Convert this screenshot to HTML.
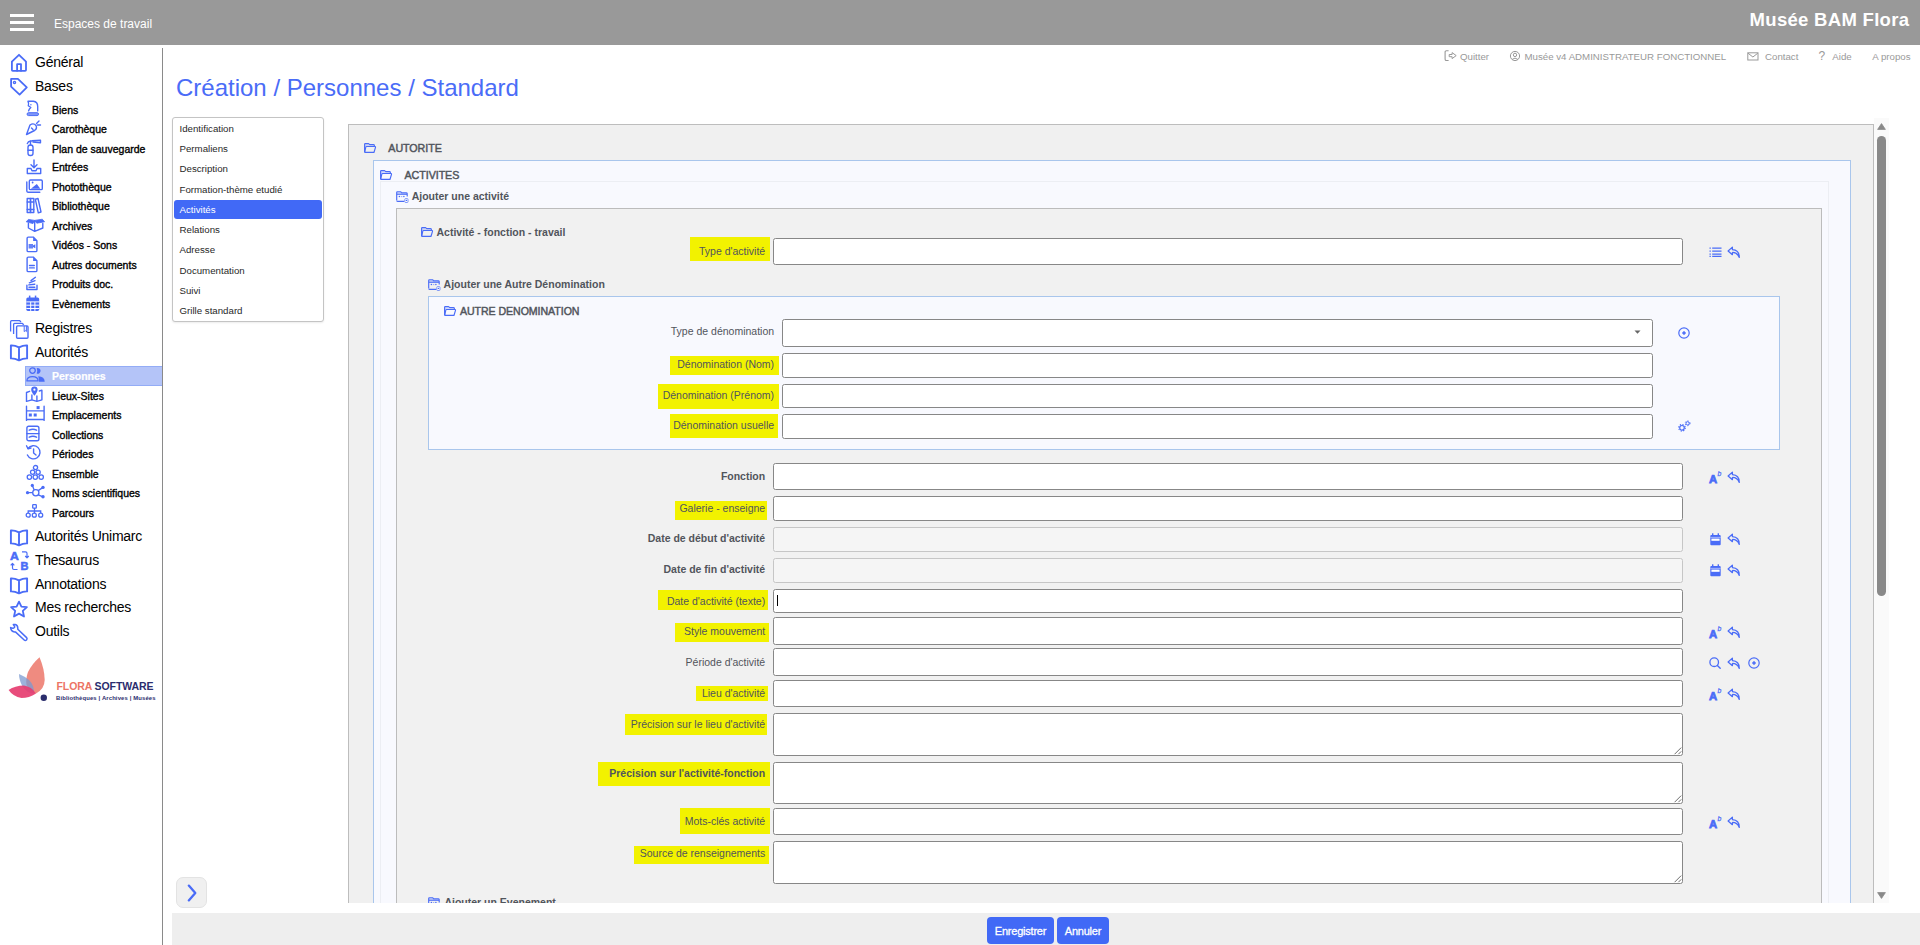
<!DOCTYPE html>
<html><head><meta charset="utf-8"><title>Création / Personnes / Standard</title>
<style>
html,body{margin:0;padding:0;overflow:hidden;}
body{width:1920px;height:945px;overflow:hidden;position:relative;background:#fff;font-family:"Liberation Sans",sans-serif;}
.t{position:absolute;white-space:pre;}
.b{position:absolute;box-sizing:border-box;}
.i{position:absolute;overflow:visible;}
</style></head><body>

<div class="b" style="left:0px;top:0px;width:1920px;height:45px;background:#999;"></div>
<div class="b" style="left:10px;top:14px;width:24px;height:3px;background:#fff;"></div>
<div class="b" style="left:10px;top:21px;width:24px;height:3px;background:#fff;"></div>
<div class="b" style="left:10px;top:28px;width:24px;height:3px;background:#fff;"></div>
<div class="t" style="left:54px;top:16.34px;font-size:12px;line-height:17px;color:#fff;font-weight:normal;">Espaces de travail</div>
<div class="t" style="right:10.700000000000045px;text-align:right;top:6.89px;font-size:18.5px;line-height:26px;color:#fff;font-weight:bold;letter-spacing:0.3px;">Musée BAM Flora</div>
<div class="t" style="left:1460px;top:49.64px;font-size:9.7px;line-height:14px;color:#999;font-weight:normal;">Quitter</div>
<div class="t" style="left:1524.5px;top:49.64px;font-size:9.7px;line-height:14px;color:#999;font-weight:normal;">Musée v4 ADMINISTRATEUR FONCTIONNEL</div>
<div class="t" style="left:1765px;top:49.64px;font-size:9.7px;line-height:14px;color:#999;font-weight:normal;">Contact</div>
<div class="t" style="left:1832.3px;top:49.64px;font-size:9.7px;line-height:14px;color:#999;font-weight:normal;">Aide</div>
<div class="t" style="left:1872.3px;top:49.64px;font-size:9.7px;line-height:14px;color:#999;font-weight:normal;">A propos</div>
<svg class="i" style="left:1444px;top:50px;" width="14" height="12" viewBox="0 0 14 12"><path d="M4.6 0.7 H2.4 Q1.1 0.7 1.1 2 V9.2 Q1.1 10.5 2.4 10.5 H4.6" fill="none" stroke="#999" stroke-width="1.1"/><path d="M5.2 4.5 H8.1 V2.6 L12.2 5.6 L8.1 8.6 V6.7 H5.2 Z" fill="none" stroke="#999" stroke-width="1" stroke-linejoin="round"/></svg>
<svg class="i" style="left:1509px;top:50px;" width="12" height="12" viewBox="0 0 12 12"><circle cx="6" cy="6" r="4.6" fill="none" stroke="#999" stroke-width="1"/><circle cx="6" cy="4.9" r="1.7" fill="none" stroke="#999" stroke-width="1"/><path d="M3.2 9.4 Q6 6.8 8.8 9.4" fill="none" stroke="#999" stroke-width="1"/></svg>
<svg class="i" style="left:1747px;top:52px;" width="12" height="9" viewBox="0 0 12 9"><rect x="0.8" y="0.8" width="10.2" height="7.2" fill="none" stroke="#999" stroke-width="1"/><path d="M1 1.2 L5.9 5 L10.8 1.2" fill="none" stroke="#999" stroke-width="1"/></svg>
<div class="t" style="left:1818.5px;top:47.84px;font-size:12px;line-height:17px;color:#999;font-weight:normal;">?</div>
<div class="b" style="left:162px;top:48px;width:1px;height:897px;background:#8a8a8a;"></div>
<div class="t" style="left:35px;top:52.15px;font-size:14px;line-height:20px;color:#000;font-weight:normal;letter-spacing:-0.25px;">Général</div>
<div class="t" style="left:35px;top:76.15px;font-size:14px;line-height:20px;color:#000;font-weight:normal;letter-spacing:-0.25px;">Bases</div>
<div class="t" style="left:35px;top:317.75px;font-size:14px;line-height:20px;color:#000;font-weight:normal;letter-spacing:-0.25px;">Registres</div>
<div class="t" style="left:35px;top:341.95px;font-size:14px;line-height:20px;color:#000;font-weight:normal;letter-spacing:-0.25px;">Autorités</div>
<div class="t" style="left:35px;top:525.95px;font-size:14px;line-height:20px;color:#000;font-weight:normal;letter-spacing:-0.25px;">Autorités Unimarc</div>
<div class="t" style="left:35px;top:549.65px;font-size:14px;line-height:20px;color:#000;font-weight:normal;letter-spacing:-0.25px;">Thesaurus</div>
<div class="t" style="left:35px;top:573.75px;font-size:14px;line-height:20px;color:#000;font-weight:normal;letter-spacing:-0.25px;">Annotations</div>
<div class="t" style="left:35px;top:597.45px;font-size:14px;line-height:20px;color:#000;font-weight:normal;letter-spacing:-0.25px;">Mes recherches</div>
<div class="t" style="left:35px;top:621.35px;font-size:14px;line-height:20px;color:#000;font-weight:normal;letter-spacing:-0.25px;">Outils</div>
<div class="b" style="left:25px;top:366px;width:137px;height:20px;background:#b4c4f8;border:1px solid #93acf6;border-right:none;"></div>
<div class="t" style="left:52px;top:368.76px;font-size:10.5px;line-height:15px;color:#fff;font-weight:bold;-webkit-text-stroke:0.2px #fff;">Personnes</div>
<div class="t" style="left:52px;top:102.86px;font-size:10.5px;line-height:15px;color:#000;font-weight:normal;-webkit-text-stroke:0.35px #000;">Biens</div>
<div class="t" style="left:52px;top:121.66px;font-size:10.5px;line-height:15px;color:#000;font-weight:normal;-webkit-text-stroke:0.35px #000;">Carothèque</div>
<div class="t" style="left:52px;top:141.66px;font-size:10.5px;line-height:15px;color:#000;font-weight:normal;-webkit-text-stroke:0.35px #000;">Plan de sauvegarde</div>
<div class="t" style="left:52px;top:160.46px;font-size:10.5px;line-height:15px;color:#000;font-weight:normal;-webkit-text-stroke:0.35px #000;">Entrées</div>
<div class="t" style="left:52px;top:180.36px;font-size:10.5px;line-height:15px;color:#000;font-weight:normal;-webkit-text-stroke:0.35px #000;">Photothèque</div>
<div class="t" style="left:52px;top:199.46px;font-size:10.5px;line-height:15px;color:#000;font-weight:normal;-webkit-text-stroke:0.35px #000;">Bibliothèque</div>
<div class="t" style="left:52px;top:219.26px;font-size:10.5px;line-height:15px;color:#000;font-weight:normal;-webkit-text-stroke:0.35px #000;">Archives</div>
<div class="t" style="left:52px;top:238.26px;font-size:10.5px;line-height:15px;color:#000;font-weight:normal;-webkit-text-stroke:0.35px #000;">Vidéos - Sons</div>
<div class="t" style="left:52px;top:258.16px;font-size:10.5px;line-height:15px;color:#000;font-weight:normal;-webkit-text-stroke:0.35px #000;">Autres documents</div>
<div class="t" style="left:52px;top:277.46px;font-size:10.5px;line-height:15px;color:#000;font-weight:normal;-webkit-text-stroke:0.35px #000;">Produits doc.</div>
<div class="t" style="left:52px;top:297.36px;font-size:10.5px;line-height:15px;color:#000;font-weight:normal;-webkit-text-stroke:0.35px #000;">Evènements</div>
<div class="t" style="left:52px;top:388.66px;font-size:10.5px;line-height:15px;color:#000;font-weight:normal;-webkit-text-stroke:0.35px #000;">Lieux-Sites</div>
<div class="t" style="left:52px;top:407.66px;font-size:10.5px;line-height:15px;color:#000;font-weight:normal;-webkit-text-stroke:0.35px #000;">Emplacements</div>
<div class="t" style="left:52px;top:427.66px;font-size:10.5px;line-height:15px;color:#000;font-weight:normal;-webkit-text-stroke:0.35px #000;">Collections</div>
<div class="t" style="left:52px;top:446.76px;font-size:10.5px;line-height:15px;color:#000;font-weight:normal;-webkit-text-stroke:0.35px #000;">Périodes</div>
<div class="t" style="left:52px;top:466.96px;font-size:10.5px;line-height:15px;color:#000;font-weight:normal;-webkit-text-stroke:0.35px #000;">Ensemble</div>
<div class="t" style="left:52px;top:486.06px;font-size:10.5px;line-height:15px;color:#000;font-weight:normal;-webkit-text-stroke:0.35px #000;">Noms scientifiques</div>
<div class="t" style="left:52px;top:505.76px;font-size:10.5px;line-height:15px;color:#000;font-weight:normal;-webkit-text-stroke:0.35px #000;">Parcours</div>
<div class="t" style="left:176px;top:71.28px;font-size:24px;line-height:34px;color:#4a6cf7;font-weight:normal;">Création / Personnes / Standard</div>
<div class="b" style="left:172px;top:117px;width:152px;height:205px;border:1px solid #c4c4c4;border-radius:3px;background:#fff;box-shadow:0 1px 2px rgba(0,0,0,0.08);"></div>
<div class="b" style="left:174px;top:200px;width:148px;height:19px;background:#4169f6;border-radius:3px;"></div>
<div class="t" style="left:179.5px;top:121.84px;font-size:9.7px;line-height:14px;color:#282828;font-weight:normal;">Identification</div>
<div class="t" style="left:179.5px;top:141.94px;font-size:9.7px;line-height:14px;color:#282828;font-weight:normal;">Permaliens</div>
<div class="t" style="left:179.5px;top:162.04px;font-size:9.7px;line-height:14px;color:#282828;font-weight:normal;">Description</div>
<div class="t" style="left:179.5px;top:182.64px;font-size:9.7px;line-height:14px;color:#282828;font-weight:normal;">Formation-thème etudié</div>
<div class="t" style="left:179.5px;top:202.84px;font-size:9.7px;line-height:14px;color:#fff;font-weight:normal;">Activités</div>
<div class="t" style="left:179.5px;top:222.94px;font-size:9.7px;line-height:14px;color:#282828;font-weight:normal;">Relations</div>
<div class="t" style="left:179.5px;top:243.04px;font-size:9.7px;line-height:14px;color:#282828;font-weight:normal;">Adresse</div>
<div class="t" style="left:179.5px;top:263.64px;font-size:9.7px;line-height:14px;color:#282828;font-weight:normal;">Documentation</div>
<div class="t" style="left:179.5px;top:283.74px;font-size:9.7px;line-height:14px;color:#282828;font-weight:normal;">Suivi</div>
<div class="t" style="left:179.5px;top:303.84px;font-size:9.7px;line-height:14px;color:#282828;font-weight:normal;">Grille standard</div>
<div class="b" style="left:348px;top:124px;width:1526px;height:821px;background:#f0f0f0;border:1px solid #bdbdbd;"></div>
<div class="b" style="left:373px;top:160px;width:1478px;height:785px;background:#f8f9fe;border:1px solid #a9c6ec;"></div>
<div class="b" style="left:380px;top:181px;width:1449px;height:764px;border:1px solid #eceef3;"></div>
<div class="b" style="left:396px;top:208px;width:1426px;height:737px;background:#f1f1f1;border:1px solid #bcbcbc;"></div>
<svg class="i" style="left:364px;top:143px;" width="12" height="10" viewBox="0 0 12 10"><path d="M0.6 9.4 V1.3 Q0.6 0.6 1.3 0.6 H4.6 L5.7 1.6 H9.4 Q10.3 1.6 10.4 2.5 V3.4" fill="none" stroke="#4a6cf7" stroke-width="1.15" stroke-linejoin="round"/><path d="M0.6 9.4 H9.6 Q10 9.4 10.1 9 L11.5 4.3 Q11.6 3.5 10.9 3.5 H2.6 Q2 3.5 1.8 4.1 L0.7 9" fill="none" stroke="#4a6cf7" stroke-width="1.15" stroke-linejoin="round"/><path d="M1 1.2 H4.4 L5.4 2.2 H10 V3.2 H2 L1 4.5 Z" fill="#4a6cf7" opacity="0.22"/></svg>
<div class="t" style="left:388.3px;top:140.79px;font-size:10.7px;line-height:15px;color:#51555c;font-weight:normal;letter-spacing:-0.05px;-webkit-text-stroke:0.45px #51555c;">AUTORITE</div>
<svg class="i" style="left:380px;top:170px;" width="12" height="10" viewBox="0 0 12 10"><path d="M0.6 9.4 V1.3 Q0.6 0.6 1.3 0.6 H4.6 L5.7 1.6 H9.4 Q10.3 1.6 10.4 2.5 V3.4" fill="none" stroke="#4a6cf7" stroke-width="1.15" stroke-linejoin="round"/><path d="M0.6 9.4 H9.6 Q10 9.4 10.1 9 L11.5 4.3 Q11.6 3.5 10.9 3.5 H2.6 Q2 3.5 1.8 4.1 L0.7 9" fill="none" stroke="#4a6cf7" stroke-width="1.15" stroke-linejoin="round"/><path d="M1 1.2 H4.4 L5.4 2.2 H10 V3.2 H2 L1 4.5 Z" fill="#4a6cf7" opacity="0.22"/></svg>
<div class="t" style="left:404.5px;top:167.99px;font-size:10.7px;line-height:15px;color:#51555c;font-weight:normal;letter-spacing:-0.05px;-webkit-text-stroke:0.45px #51555c;">ACTIVITES</div>
<svg class="i" style="left:396px;top:190.5px;" width="13" height="12" viewBox="0 0 13 12"><path d="M0.7 9.3 V1.4 Q0.7 0.7 1.4 0.7 H4.6 L5.6 1.8 H10.3 Q11.1 1.8 11.2 2.6 V5.5" fill="none" stroke="#4a6cf7" stroke-width="1.15" stroke-linejoin="round"/><path d="M0.7 3.3 H11" stroke="#4a6cf7" stroke-width="1"/><path d="M0.7 9.5 Q0.7 10.4 1.6 10.4 H8.3" fill="none" stroke="#4a6cf7" stroke-width="1.15"/><path d="M1 1.2 H4.4 L5.4 2.4 H10.8 V3 H1 Z" fill="#4a6cf7" opacity="0.3"/><circle cx="3.4" cy="5.6" r="0.75" fill="#4a6cf7"/><path d="M4.9 5.6 H6.3" stroke="#4a6cf7" stroke-width="0.9" opacity="0.6"/><circle cx="7.9" cy="5.6" r="0.75" fill="#4a6cf7"/><rect x="8.8" y="7.6" width="3.2" height="3.9" rx="0.8" fill="#fff" stroke="#4a6cf7" stroke-width="0.8" opacity="0.85"/><circle cx="10.4" cy="9.4" r="0.7" fill="#4a6cf7"/></svg>
<div class="t" style="left:411.7px;top:188.96px;font-size:10.5px;line-height:15px;color:#51555c;font-weight:bold;">Ajouter une activité</div>
<svg class="i" style="left:421px;top:227px;" width="12" height="10" viewBox="0 0 12 10"><path d="M0.6 9.4 V1.3 Q0.6 0.6 1.3 0.6 H4.6 L5.7 1.6 H9.4 Q10.3 1.6 10.4 2.5 V3.4" fill="none" stroke="#4a6cf7" stroke-width="1.15" stroke-linejoin="round"/><path d="M0.6 9.4 H9.6 Q10 9.4 10.1 9 L11.5 4.3 Q11.6 3.5 10.9 3.5 H2.6 Q2 3.5 1.8 4.1 L0.7 9" fill="none" stroke="#4a6cf7" stroke-width="1.15" stroke-linejoin="round"/><path d="M1 1.2 H4.4 L5.4 2.2 H10 V3.2 H2 L1 4.5 Z" fill="#4a6cf7" opacity="0.22"/></svg>
<div class="t" style="left:436.5px;top:224.86px;font-size:10.5px;line-height:15px;color:#51555c;font-weight:bold;">Activité - fonction - travail</div>
<div class="b" style="left:690px;top:237px;width:80px;height:24px;background:#f2f200;"></div>
<div class="t" style="right:1154.8px;text-align:right;top:243.61px;font-size:10.5px;line-height:15px;color:#51555c;font-weight:normal;">Type d'activité</div>
<div class="b" style="left:773px;top:238px;width:910px;height:27px;background:#fff;border:1px solid #878787;border-radius:2.5px;"></div>
<svg class="i" style="left:428px;top:279px;" width="13" height="12" viewBox="0 0 13 12"><path d="M0.7 9.3 V1.4 Q0.7 0.7 1.4 0.7 H4.6 L5.6 1.8 H10.3 Q11.1 1.8 11.2 2.6 V5.5" fill="none" stroke="#4a6cf7" stroke-width="1.15" stroke-linejoin="round"/><path d="M0.7 3.3 H11" stroke="#4a6cf7" stroke-width="1"/><path d="M0.7 9.5 Q0.7 10.4 1.6 10.4 H8.3" fill="none" stroke="#4a6cf7" stroke-width="1.15"/><path d="M1 1.2 H4.4 L5.4 2.4 H10.8 V3 H1 Z" fill="#4a6cf7" opacity="0.3"/><circle cx="3.4" cy="5.6" r="0.75" fill="#4a6cf7"/><path d="M4.9 5.6 H6.3" stroke="#4a6cf7" stroke-width="0.9" opacity="0.6"/><circle cx="7.9" cy="5.6" r="0.75" fill="#4a6cf7"/><rect x="8.8" y="7.6" width="3.2" height="3.9" rx="0.8" fill="#fff" stroke="#4a6cf7" stroke-width="0.8" opacity="0.85"/><circle cx="10.4" cy="9.4" r="0.7" fill="#4a6cf7"/></svg>
<div class="t" style="left:443.6px;top:276.86px;font-size:10.5px;line-height:15px;color:#51555c;font-weight:bold;">Ajouter une Autre Dénomination</div>
<div class="b" style="left:428px;top:296px;width:1352px;height:154px;background:#f8f9fe;border:1px solid #a9c6ec;"></div>
<svg class="i" style="left:444px;top:306px;" width="12" height="10" viewBox="0 0 12 10"><path d="M0.6 9.4 V1.3 Q0.6 0.6 1.3 0.6 H4.6 L5.7 1.6 H9.4 Q10.3 1.6 10.4 2.5 V3.4" fill="none" stroke="#4a6cf7" stroke-width="1.15" stroke-linejoin="round"/><path d="M0.6 9.4 H9.6 Q10 9.4 10.1 9 L11.5 4.3 Q11.6 3.5 10.9 3.5 H2.6 Q2 3.5 1.8 4.1 L0.7 9" fill="none" stroke="#4a6cf7" stroke-width="1.15" stroke-linejoin="round"/><path d="M1 1.2 H4.4 L5.4 2.2 H10 V3.2 H2 L1 4.5 Z" fill="#4a6cf7" opacity="0.22"/></svg>
<div class="t" style="left:459.9px;top:304.23px;font-size:10.6px;line-height:15px;color:#51555c;font-weight:normal;letter-spacing:-0.05px;-webkit-text-stroke:0.45px #51555c;">AUTRE DENOMINATION</div>
<div class="t" style="right:1145.9px;text-align:right;top:323.86px;font-size:10.5px;line-height:15px;color:#51555c;font-weight:normal;">Type de dénomination</div>
<div class="b" style="left:782px;top:319px;width:871px;height:28px;background:#fff;border:1px solid #878787;border-radius:2.5px;"></div>
<svg class="i" style="left:1634px;top:330px;" width="8" height="5" viewBox="0 0 8 5"><path d="M0.5 0.5 H6.5 L3.5 3.8 Z" fill="#666"/></svg>
<div class="b" style="left:670px;top:356px;width:109px;height:19px;background:#f2f200;"></div>
<div class="t" style="right:1145.9px;text-align:right;top:356.56px;font-size:10.5px;line-height:15px;color:#51555c;font-weight:normal;">Dénomination (Nom)</div>
<div class="b" style="left:782px;top:353px;width:871px;height:25px;background:#fff;border:1px solid #878787;border-radius:2.5px;"></div>
<div class="b" style="left:658px;top:384px;width:121px;height:25px;background:#f2f200;"></div>
<div class="t" style="right:1145.9px;text-align:right;top:387.56px;font-size:10.5px;line-height:15px;color:#51555c;font-weight:normal;">Dénomination (Prénom)</div>
<div class="b" style="left:782px;top:384px;width:871px;height:24px;background:#fff;border:1px solid #878787;border-radius:2.5px;"></div>
<div class="b" style="left:670px;top:414px;width:108px;height:24px;background:#f2f200;"></div>
<div class="t" style="right:1145.9px;text-align:right;top:418.46px;font-size:10.5px;line-height:15px;color:#51555c;font-weight:normal;">Dénomination usuelle</div>
<div class="b" style="left:782px;top:414px;width:871px;height:25px;background:#fff;border:1px solid #878787;border-radius:2.5px;"></div>
<div class="t" style="right:1154.8px;text-align:right;top:468.86px;font-size:10.5px;line-height:15px;color:#51555c;font-weight:bold;">Fonction</div>
<div class="b" style="left:773px;top:463px;width:910px;height:27px;background:#fff;border:1px solid #878787;border-radius:2.5px;"></div>
<div class="b" style="left:675px;top:501px;width:92px;height:19px;background:#f2f200;"></div>
<div class="t" style="right:1154.8px;text-align:right;top:500.56px;font-size:10.5px;line-height:15px;color:#51555c;font-weight:normal;">Galerie - enseigne</div>
<div class="b" style="left:773px;top:496px;width:910px;height:25px;background:#fff;border:1px solid #878787;border-radius:2.5px;"></div>
<div class="t" style="right:1154.8px;text-align:right;top:531.06px;font-size:10.5px;line-height:15px;color:#51555c;font-weight:bold;">Date de début d'activité</div>
<div class="b" style="left:773px;top:527px;width:910px;height:25px;background:#f5f5f5;border:1px solid #c6c6c6;border-radius:2.5px;"></div>
<div class="t" style="right:1154.8px;text-align:right;top:562.16px;font-size:10.5px;line-height:15px;color:#51555c;font-weight:bold;">Date de fin d'activité</div>
<div class="b" style="left:773px;top:558px;width:910px;height:25px;background:#f5f5f5;border:1px solid #c6c6c6;border-radius:2.5px;"></div>
<div class="b" style="left:658px;top:590px;width:110px;height:20px;background:#f2f200;"></div>
<div class="t" style="right:1154.8px;text-align:right;top:593.56px;font-size:10.5px;line-height:15px;color:#51555c;font-weight:normal;">Date d'activité (texte)</div>
<div class="b" style="left:773px;top:589px;width:910px;height:24px;background:#fff;border:1px solid #878787;border-radius:2.5px;"></div>
<div class="b" style="left:777px;top:595px;width:1px;height:11px;background:#000;"></div>
<div class="b" style="left:675px;top:623px;width:94px;height:19px;background:#f2f200;"></div>
<div class="t" style="right:1154.8px;text-align:right;top:624.16px;font-size:10.5px;line-height:15px;color:#51555c;font-weight:normal;">Style mouvement</div>
<div class="b" style="left:773px;top:617px;width:910px;height:28px;background:#fff;border:1px solid #878787;border-radius:2.5px;"></div>
<div class="t" style="right:1154.8px;text-align:right;top:654.86px;font-size:10.5px;line-height:15px;color:#51555c;font-weight:normal;">Période d'activité</div>
<div class="b" style="left:773px;top:648px;width:910px;height:28px;background:#fff;border:1px solid #878787;border-radius:2.5px;"></div>
<div class="b" style="left:696px;top:686px;width:72px;height:15px;background:#f2f200;"></div>
<div class="t" style="right:1154.8px;text-align:right;top:686.26px;font-size:10.5px;line-height:15px;color:#51555c;font-weight:normal;">Lieu d'activité</div>
<div class="b" style="left:773px;top:680px;width:910px;height:27px;background:#fff;border:1px solid #878787;border-radius:2.5px;"></div>
<div class="b" style="left:625px;top:714px;width:142px;height:21px;background:#f2f200;"></div>
<div class="t" style="right:1154.8px;text-align:right;top:717.26px;font-size:10.5px;line-height:15px;color:#51555c;font-weight:normal;">Précision sur le lieu d'activité</div>
<div class="b" style="left:773px;top:713px;width:910px;height:43px;background:#fff;border:1px solid #878787;border-radius:2.5px;"></div>
<svg class="i" style="left:1673.5px;top:746.5px;" width="8" height="8" viewBox="0 0 8 8"><path d="M7.2 0.6 L0.6 7.2 M7.2 4.4 L4.4 7.2" stroke="#666" stroke-width="0.95"/></svg>
<div class="b" style="left:598px;top:762px;width:172px;height:24px;background:#f2f200;"></div>
<div class="t" style="right:1154.8px;text-align:right;top:766.16px;font-size:10.5px;line-height:15px;color:#51555c;font-weight:bold;">Précision sur l'activité-fonction</div>
<div class="b" style="left:773px;top:762px;width:910px;height:42px;background:#fff;border:1px solid #878787;border-radius:2.5px;"></div>
<svg class="i" style="left:1673.5px;top:794.5px;" width="8" height="8" viewBox="0 0 8 8"><path d="M7.2 0.6 L0.6 7.2 M7.2 4.4 L4.4 7.2" stroke="#666" stroke-width="0.95"/></svg>
<div class="b" style="left:680px;top:808px;width:90px;height:26px;background:#f2f200;"></div>
<div class="t" style="right:1154.8px;text-align:right;top:814.46px;font-size:10.5px;line-height:15px;color:#51555c;font-weight:normal;">Mots-clés activité</div>
<div class="b" style="left:773px;top:808px;width:910px;height:27px;background:#fff;border:1px solid #878787;border-radius:2.5px;"></div>
<div class="b" style="left:634px;top:846px;width:135px;height:18px;background:#f2f200;"></div>
<div class="t" style="right:1154.8px;text-align:right;top:846.16px;font-size:10.5px;line-height:15px;color:#51555c;font-weight:normal;">Source de renseignements</div>
<div class="b" style="left:773px;top:841px;width:910px;height:43px;background:#fff;border:1px solid #878787;border-radius:2.5px;"></div>
<svg class="i" style="left:1673.5px;top:874.5px;" width="8" height="8" viewBox="0 0 8 8"><path d="M7.2 0.6 L0.6 7.2 M7.2 4.4 L4.4 7.2" stroke="#666" stroke-width="0.95"/></svg>
<svg class="i" style="left:428px;top:897px;" width="13" height="12" viewBox="0 0 13 12"><path d="M0.7 9.3 V1.4 Q0.7 0.7 1.4 0.7 H4.6 L5.6 1.8 H10.3 Q11.1 1.8 11.2 2.6 V5.5" fill="none" stroke="#4a6cf7" stroke-width="1.15" stroke-linejoin="round"/><path d="M0.7 3.3 H11" stroke="#4a6cf7" stroke-width="1"/><path d="M0.7 9.5 Q0.7 10.4 1.6 10.4 H8.3" fill="none" stroke="#4a6cf7" stroke-width="1.15"/><path d="M1 1.2 H4.4 L5.4 2.4 H10.8 V3 H1 Z" fill="#4a6cf7" opacity="0.3"/><circle cx="3.4" cy="5.6" r="0.75" fill="#4a6cf7"/><path d="M4.9 5.6 H6.3" stroke="#4a6cf7" stroke-width="0.9" opacity="0.6"/><circle cx="7.9" cy="5.6" r="0.75" fill="#4a6cf7"/><rect x="8.8" y="7.6" width="3.2" height="3.9" rx="0.8" fill="#fff" stroke="#4a6cf7" stroke-width="0.8" opacity="0.85"/><circle cx="10.4" cy="9.4" r="0.7" fill="#4a6cf7"/></svg>
<div class="t" style="left:444.4px;top:894.86px;font-size:10.5px;line-height:15px;color:#51555c;font-weight:bold;">Ajouter un Evenement</div>
<svg class="i" style="left:1708.7px;top:247px;" width="13" height="10" viewBox="0 0 13 10"><path d="M0.5 1.2 H1.8 M0.5 4.2 H1.8 M0.5 7.2 H1.8 M3.2 1.2 H12.5 M3.2 4.2 H12.5 M3.2 7.2 H12.5 M0.5 9.3 H1.8 M3.2 9.3 H12.5" stroke="#4a6cf7" stroke-width="1.3"/></svg>
<svg class="i" style="left:1727.4px;top:246px;" width="14" height="12.5" viewBox="0 0 14 12.5"><path d="M5.4 1.1 L1.1 5 L5.4 8.7 V6.5 Q10.1 6.4 12.3 11.4 Q12.3 4 5.4 3.7 Z" fill="none" stroke="#4a6cf7" stroke-width="1.25" stroke-linejoin="round"/></svg>
<svg class="i" style="left:1678px;top:327px;" width="12" height="12" viewBox="0 0 12 12"><circle cx="6" cy="6" r="5.2" fill="none" stroke="#4a6cf7" stroke-width="1.2"/><path d="M6 4.2 V7.8 M4.2 6 H7.8" stroke="#4a6cf7" stroke-width="1.6"/></svg>
<svg class="i" style="left:1678px;top:419.5px;" width="13" height="13" viewBox="0 0 13 13"><circle cx="4" cy="7.8" r="2.3" fill="none" stroke="#4a6cf7" stroke-width="1.2"/><circle cx="4" cy="7.8" r="3.3" fill="none" stroke="#4a6cf7" stroke-width="1.1" stroke-dasharray="1.3 1.29"/><circle cx="9.6" cy="3.3" r="1.6" fill="none" stroke="#4a6cf7" stroke-width="1"/><circle cx="9.6" cy="3.3" r="2.4" fill="none" stroke="#4a6cf7" stroke-width="1" stroke-dasharray="1.1 1.41"/></svg>
<svg class="i" style="left:1709px;top:471px;" width="13" height="12" viewBox="0 0 13 12"><text x="0" y="11.8" font-family="Liberation Sans" font-weight="bold" font-size="11.3" fill="#4a6cf7" stroke="#4a6cf7" stroke-width="0.75">A</text><text x="8.4" y="4.9" font-family="Liberation Sans" font-style="italic" font-size="6.8" fill="#4a6cf7" stroke="#4a6cf7" stroke-width="0.25">b</text></svg>
<svg class="i" style="left:1727.4px;top:471.2px;" width="14" height="12.5" viewBox="0 0 14 12.5"><path d="M5.4 1.1 L1.1 5 L5.4 8.7 V6.5 Q10.1 6.4 12.3 11.4 Q12.3 4 5.4 3.7 Z" fill="none" stroke="#4a6cf7" stroke-width="1.25" stroke-linejoin="round"/></svg>
<svg class="i" style="left:1709.5px;top:532.8px;" width="11" height="13" viewBox="0 0 11 13"><rect x="0.3" y="2" width="10.4" height="10.2" rx="1" fill="#4a6cf7"/><rect x="2" y="0.3" width="1.4" height="2.5" fill="#4a6cf7"/><rect x="7.6" y="0.3" width="1.4" height="2.5" fill="#4a6cf7"/><rect x="1.4" y="5.6" width="8.2" height="2.2" fill="#fff"/><rect x="0.3" y="3.9" width="10.4" height="0.8" fill="#b9c6fb"/></svg>
<svg class="i" style="left:1727.4px;top:533.2px;" width="14" height="12.5" viewBox="0 0 14 12.5"><path d="M5.4 1.1 L1.1 5 L5.4 8.7 V6.5 Q10.1 6.4 12.3 11.4 Q12.3 4 5.4 3.7 Z" fill="none" stroke="#4a6cf7" stroke-width="1.25" stroke-linejoin="round"/></svg>
<svg class="i" style="left:1709.5px;top:563.8px;" width="11" height="13" viewBox="0 0 11 13"><rect x="0.3" y="2" width="10.4" height="10.2" rx="1" fill="#4a6cf7"/><rect x="2" y="0.3" width="1.4" height="2.5" fill="#4a6cf7"/><rect x="7.6" y="0.3" width="1.4" height="2.5" fill="#4a6cf7"/><rect x="1.4" y="5.6" width="8.2" height="2.2" fill="#fff"/><rect x="0.3" y="3.9" width="10.4" height="0.8" fill="#b9c6fb"/></svg>
<svg class="i" style="left:1727.4px;top:564.2px;" width="14" height="12.5" viewBox="0 0 14 12.5"><path d="M5.4 1.1 L1.1 5 L5.4 8.7 V6.5 Q10.1 6.4 12.3 11.4 Q12.3 4 5.4 3.7 Z" fill="none" stroke="#4a6cf7" stroke-width="1.25" stroke-linejoin="round"/></svg>
<svg class="i" style="left:1709px;top:626px;" width="13" height="12" viewBox="0 0 13 12"><text x="0" y="11.8" font-family="Liberation Sans" font-weight="bold" font-size="11.3" fill="#4a6cf7" stroke="#4a6cf7" stroke-width="0.75">A</text><text x="8.4" y="4.9" font-family="Liberation Sans" font-style="italic" font-size="6.8" fill="#4a6cf7" stroke="#4a6cf7" stroke-width="0.25">b</text></svg>
<svg class="i" style="left:1727.4px;top:626.2px;" width="14" height="12.5" viewBox="0 0 14 12.5"><path d="M5.4 1.1 L1.1 5 L5.4 8.7 V6.5 Q10.1 6.4 12.3 11.4 Q12.3 4 5.4 3.7 Z" fill="none" stroke="#4a6cf7" stroke-width="1.25" stroke-linejoin="round"/></svg>
<svg class="i" style="left:1709px;top:657px;" width="12" height="12" viewBox="0 0 12 12"><circle cx="5.2" cy="5.2" r="4.3" fill="none" stroke="#4a6cf7" stroke-width="1.3"/><path d="M8.4 8.4 L11.2 11.2" stroke="#4a6cf7" stroke-width="1.4" stroke-linecap="round"/></svg>
<svg class="i" style="left:1727.4px;top:657.2px;" width="14" height="12.5" viewBox="0 0 14 12.5"><path d="M5.4 1.1 L1.1 5 L5.4 8.7 V6.5 Q10.1 6.4 12.3 11.4 Q12.3 4 5.4 3.7 Z" fill="none" stroke="#4a6cf7" stroke-width="1.25" stroke-linejoin="round"/></svg>
<svg class="i" style="left:1748px;top:657px;" width="12" height="12" viewBox="0 0 12 12"><circle cx="6" cy="6" r="5.2" fill="none" stroke="#4a6cf7" stroke-width="1.2"/><path d="M6 4.2 V7.8 M4.2 6 H7.8" stroke="#4a6cf7" stroke-width="1.6"/></svg>
<svg class="i" style="left:1709px;top:688px;" width="13" height="12" viewBox="0 0 13 12"><text x="0" y="11.8" font-family="Liberation Sans" font-weight="bold" font-size="11.3" fill="#4a6cf7" stroke="#4a6cf7" stroke-width="0.75">A</text><text x="8.4" y="4.9" font-family="Liberation Sans" font-style="italic" font-size="6.8" fill="#4a6cf7" stroke="#4a6cf7" stroke-width="0.25">b</text></svg>
<svg class="i" style="left:1727.4px;top:688.2px;" width="14" height="12.5" viewBox="0 0 14 12.5"><path d="M5.4 1.1 L1.1 5 L5.4 8.7 V6.5 Q10.1 6.4 12.3 11.4 Q12.3 4 5.4 3.7 Z" fill="none" stroke="#4a6cf7" stroke-width="1.25" stroke-linejoin="round"/></svg>
<svg class="i" style="left:1709px;top:816px;" width="13" height="12" viewBox="0 0 13 12"><text x="0" y="11.8" font-family="Liberation Sans" font-weight="bold" font-size="11.3" fill="#4a6cf7" stroke="#4a6cf7" stroke-width="0.75">A</text><text x="8.4" y="4.9" font-family="Liberation Sans" font-style="italic" font-size="6.8" fill="#4a6cf7" stroke="#4a6cf7" stroke-width="0.25">b</text></svg>
<svg class="i" style="left:1727.4px;top:816.2px;" width="14" height="12.5" viewBox="0 0 14 12.5"><path d="M5.4 1.1 L1.1 5 L5.4 8.7 V6.5 Q10.1 6.4 12.3 11.4 Q12.3 4 5.4 3.7 Z" fill="none" stroke="#4a6cf7" stroke-width="1.25" stroke-linejoin="round"/></svg>
<div class="b" style="left:163px;top:903px;width:1757px;height:42px;background:#fff;"></div>
<div class="b" style="left:1889px;top:118px;width:31px;height:785px;background:#fff;"></div>
<div class="b" style="left:1874px;top:118px;width:15px;height:785px;background:#fafafa;"></div>
<svg class="i" style="left:1877px;top:123px;" width="9" height="7" viewBox="0 0 9 7"><path d="M4.5 0.6 L8.4 6.4 H0.6 Z" fill="#898989" stroke="#898989" stroke-width="0.8" stroke-linejoin="round"/></svg>
<div class="b" style="left:1877px;top:136px;width:9px;height:460px;background:#898989;border-radius:4.5px;"></div>
<svg class="i" style="left:1877px;top:892px;" width="9" height="7" viewBox="0 0 9 7"><path d="M4.5 6.4 L8.4 0.6 H0.6 Z" fill="#898989" stroke="#898989" stroke-width="0.8" stroke-linejoin="round"/></svg>
<div class="b" style="left:172px;top:913px;width:1748px;height:32px;background:#eee;"></div>
<div class="b" style="left:987px;top:917px;width:67px;height:27px;background:#4169f6;border-radius:4px;"></div>
<div class="t" style="left:1020.5px;top:923.69px;font-size:11px;line-height:15px;color:#fff;font-weight:normal;transform:translateX(-50%);letter-spacing:-0.22px;-webkit-text-stroke:0.3px #fff;">Enregistrer</div>
<div class="b" style="left:1057px;top:917px;width:52px;height:27px;background:#4169f6;border-radius:4px;"></div>
<div class="t" style="left:1083px;top:923.69px;font-size:11px;line-height:15px;color:#fff;font-weight:normal;transform:translateX(-50%);letter-spacing:-0.22px;-webkit-text-stroke:0.3px #fff;">Annuler</div>
<div class="b" style="left:176px;top:877px;width:31px;height:31px;background:#f0f0f0;border:1px solid #e3e3e3;border-radius:7px;"></div>
<svg class="i" style="left:187px;top:884px;" width="10" height="18" viewBox="0 0 10 18"><path d="M1.8 1.6 L8.3 9 L1.8 16.4" fill="none" stroke="#4a6cf7" stroke-width="2.3" stroke-linecap="round" stroke-linejoin="round"/></svg>
<svg class="i" style="left:10px;top:53px;" width="18" height="20" viewBox="0 0 18 20"><path d="M1.9 8.6 L9 1.8 L16 8.6 V16.9 Q16 17.8 15.1 17.8 H2.8 Q1.9 17.8 1.9 16.9 Z" fill="none" stroke="#4a6cf7" stroke-width="1.8" stroke-linejoin="round" stroke-linecap="round"/><path d="M7.1 17.8 V11.2 H11 V17.8" fill="none" stroke="#4a6cf7" stroke-width="1.8" stroke-linejoin="round" stroke-linecap="round"/></svg>
<svg class="i" style="left:9px;top:77px;" width="20" height="20" viewBox="0 0 20 20"><path d="M2.1 1.9 H8.9 L17.8 10.3 L10.6 17.6 L2.1 9.6 Z" fill="none" stroke="#4a6cf7" stroke-width="1.8" stroke-linejoin="round" stroke-linecap="round"/><circle cx="5.5" cy="5.5" r="1.1" fill="none" stroke="#4a6cf7" stroke-width="1.3"/></svg>
<svg class="i" style="left:26px;top:100px;" width="14" height="17" viewBox="0 0 14 17"><path d="M2 1.3 H7.3 Q11.7 1.8 11.7 6.5 V10.9 M2 1.3 Q3.2 3.5 2.3 5.7 L4.8 7.5 Q3 9 2.6 10.9" fill="none" stroke="#4a6cf7" stroke-width="1.4" stroke-linejoin="round" stroke-linecap="round"/><circle cx="4.9" cy="4.8" r="0.7" fill="#4a6cf7"/><rect x="1.1" y="12.7" width="11.4" height="2.9" rx="1.4" fill="#7f97f8" stroke="#4a6cf7" stroke-width="1"/></svg>
<svg class="i" style="left:25px;top:119px;" width="17" height="17" viewBox="0 0 17 17"><path d="M1.5 15.5 L5 6 Q8.5 3.5 11 6.5 Q12.5 9.5 9.5 11.5 Z" fill="none" stroke="#4a6cf7" stroke-width="1.4" stroke-linejoin="round" stroke-linecap="round"/><path d="M11.5 4.5 L14 2 M12.5 6 L15.5 6" fill="none" stroke="#4a6cf7" stroke-width="1.4" stroke-linejoin="round" stroke-linecap="round"/><path d="M6.5 9 L8 10.5" fill="none" stroke="#4a6cf7" stroke-width="1.4" stroke-linejoin="round" stroke-linecap="round"/></svg>
<svg class="i" style="left:26px;top:139px;" width="16" height="18" viewBox="0 0 16 18"><rect x="2" y="6" width="5" height="10.5" rx="2.3" fill="none" stroke="#4a6cf7" stroke-width="1.4" stroke-linejoin="round" stroke-linecap="round"/><path d="M4.5 6 V3.2 Q4.5 1.8 6 1.8 L14.5 1.2 V3.8 L7 3" fill="none" stroke="#4a6cf7" stroke-width="1.4" stroke-linejoin="round" stroke-linecap="round"/><path d="M1.3 4.6 Q2 2.3 4.5 2" fill="none" stroke="#4a6cf7" stroke-width="1.4" stroke-linejoin="round" stroke-linecap="round"/><path d="M2 11.2 H7" fill="none" stroke="#4a6cf7" stroke-width="1.4" stroke-linejoin="round" stroke-linecap="round"/></svg>
<svg class="i" style="left:26px;top:159px;" width="16" height="16" viewBox="0 0 16 16"><path d="M8 1 V8.5 M5 5.8 L8 8.8 L11 5.8" fill="none" stroke="#4a6cf7" stroke-width="1.4" stroke-linejoin="round" stroke-linecap="round"/><path d="M1.3 9.5 V14.5 H14.7 V9.5 H11 L10 11.8 H6 L5 9.5 Z" fill="none" stroke="#4a6cf7" stroke-width="1.4" stroke-linejoin="round" stroke-linecap="round"/></svg>
<svg class="i" style="left:26px;top:179px;" width="18" height="15" viewBox="0 0 18 15"><rect x="3.3" y="1" width="13" height="9.6" rx="1.2" fill="none" stroke="#4a6cf7" stroke-width="1.4" stroke-linejoin="round" stroke-linecap="round"/><path d="M0.8 3 V12.1 Q0.8 13.2 1.9 13.2 H13.8" fill="none" stroke="#4a6cf7" stroke-width="1.4" stroke-linejoin="round" stroke-linecap="round"/><path d="M4.9 9.8 L10.8 4.9 L14.3 9.8 Z" fill="#4a6cf7"/><circle cx="6.6" cy="3.5" r="0.9" fill="#4a6cf7"/></svg>
<svg class="i" style="left:26px;top:197px;" width="16" height="17" viewBox="0 0 16 17"><rect x="1.2" y="1.5" width="3.3" height="14" fill="none" stroke="#4a6cf7" stroke-width="1.4" stroke-linejoin="round" stroke-linecap="round"/><rect x="4.5" y="1.5" width="3.3" height="14" fill="none" stroke="#4a6cf7" stroke-width="1.4" stroke-linejoin="round" stroke-linecap="round"/><path d="M9.3 2.2 L12 1.5 L15 15 L12.3 15.8 Z" fill="none" stroke="#4a6cf7" stroke-width="1.4" stroke-linejoin="round" stroke-linecap="round"/><path d="M1.2 5 H7.8 M1.2 12.5 H7.8" fill="none" stroke="#4a6cf7" stroke-width="1.4" stroke-linejoin="round" stroke-linecap="round"/></svg>
<svg class="i" style="left:25px;top:217px;" width="21" height="16" viewBox="0 0 21 16"><path d="M1.2 4.8 L3.4 2.4 L9.7 3.4 L8 6.6 Z M9.7 3.4 L17.3 2.2 L19.6 4.8 L11.8 6.2 Z" fill="#4a6cf7" stroke="#4a6cf7" stroke-width="0.8" stroke-linejoin="round"/><path d="M3.4 6.5 V11 L9.7 14.3 L17.8 11 V6.5 M9.7 4 V14.3" fill="none" stroke="#4a6cf7" stroke-width="1.4" stroke-linejoin="round" stroke-linecap="round"/></svg>
<svg class="i" style="left:26px;top:236px;" width="12" height="17" viewBox="0 0 12 17"><path d="M1.1 2.3 Q1.1 1.1 2.3 1.1 H7.3 L10.9 4.7 V14.4 Q10.9 15.6 9.7 15.6 H2.3 Q1.1 15.6 1.1 14.4 Z" fill="none" stroke="#4a6cf7" stroke-width="1.4" stroke-linejoin="round" stroke-linecap="round"/><path d="M7.1 1.3 V4.9 H10.7 Z" fill="#4a6cf7"/><rect x="2.6" y="8" width="4.4" height="4.5" fill="#4a6cf7" opacity="0.85"/><path d="M7 9.6 L9.3 8.2 V12.3 L7 10.9 Z" fill="#4a6cf7"/></svg>
<svg class="i" style="left:26px;top:256px;" width="12" height="17" viewBox="0 0 12 17"><path d="M1.1 2.3 Q1.1 1.1 2.3 1.1 H7.3 L10.9 4.7 V14.4 Q10.9 15.6 9.7 15.6 H2.3 Q1.1 15.6 1.1 14.4 Z" fill="none" stroke="#4a6cf7" stroke-width="1.4" stroke-linejoin="round" stroke-linecap="round"/><path d="M7.1 1.3 V4.9 H10.7 Z" fill="#4a6cf7"/><path d="M3.5 9.5 H8.3 M3.5 11.9 H8.3" fill="none" stroke="#4a6cf7" stroke-width="1.4" stroke-linejoin="round" stroke-linecap="round"/></svg>
<svg class="i" style="left:26px;top:276px;" width="12" height="15" viewBox="0 0 12 15"><path d="M0.9 9.2 V13.5 H11 V9.2" fill="none" stroke="#4a6cf7" stroke-width="1.4" stroke-linejoin="round" stroke-linecap="round"/><path d="M3 11.3 H8.8 M2.8 8.9 L8.8 8.2 M3.4 6.8 L9 4.6 M5 4.6 L9.4 1.3" fill="none" stroke="#4a6cf7" stroke-width="1.4" stroke-linejoin="round" stroke-linecap="round"/></svg>
<svg class="i" style="left:26px;top:295px;" width="14" height="17" viewBox="0 0 14 17"><rect x="0.3" y="2.4" width="12.9" height="13.5" rx="1.6" fill="#4a6cf7"/><rect x="2.9" y="0.6" width="1.5" height="3" fill="#4a6cf7"/><rect x="8.8" y="0.6" width="1.5" height="3" fill="#4a6cf7"/><path d="M0.3 6.9 H13.2 M0.3 10.2 H13.2 M0.3 13.5 H13.2 M4.7 6.9 V15.9 M8.9 6.9 V15.9" stroke="#fff" stroke-width="1"/></svg>
<svg class="i" style="left:9px;top:319px;" width="21" height="21" viewBox="0 0 21 21"><path d="M1.6 12.5 V2.7 Q1.6 1.6 2.7 1.6 H10.5 L12 3" fill="none" stroke="#4a6cf7" stroke-width="1.3" stroke-linejoin="round"/><path d="M4.6 15 V5.4 Q4.6 4.4 5.6 4.4 H13.3 L14.8 5.8" fill="none" stroke="#4a6cf7" stroke-width="1.3" stroke-linejoin="round"/><rect x="7.6" y="6.9" width="11.4" height="12.3" rx="1" fill="#fff" stroke="#4a6cf7" stroke-width="1.4"/><path d="M15.2 7 V12.6 L16.3 11.6 L17.4 12.6 V7" fill="none" stroke="#4a6cf7" stroke-width="1"/></svg>
<svg class="i" style="left:9px;top:344px;" width="20" height="18" viewBox="0 0 20 18"><path d="M1.9 1.4 Q5.8 1.2 10 3.3 Q14.2 1.2 18.1 1.4 V14.4 Q14.2 14.3 10 16.4 Q5.8 14.3 1.9 14.4 Z M10 3.3 V16.4" fill="none" stroke="#4a6cf7" stroke-width="1.9" stroke-linejoin="round"/></svg>
<svg class="i" style="left:26px;top:367px;" width="19" height="17" viewBox="0 0 19 17"><circle cx="6.5" cy="3.6" r="2.8" fill="none" stroke="#4a6cf7" stroke-width="1.3"/><path d="M10.7 1.2 A2.85 2.85 0 1 1 10.7 6.5 Q11.8 3.85 10.7 1.2 Z" fill="#4a6cf7"/><path d="M0.9 13.9 Q0.9 9.65 6.5 9.65 Q12.1 9.65 12.1 13.9 Z" fill="none" stroke="#4a6cf7" stroke-width="1.3" stroke-linejoin="round"/><path d="M12.2 9.2 Q18.7 9.5 18.7 14.8 H13 Q13 11.5 12.2 9.2 Z" fill="#4a6cf7"/></svg>
<svg class="i" style="left:25px;top:386px;" width="19" height="17" viewBox="0 0 19 17"><path d="M4.6 5.3 L1.5 6.5 V15.4 L6.9 13.8 L11.9 15.4 L16.9 13.8 V4.2 L14.4 5 M6.9 13.8 V9 M11.9 15.4 V10" fill="none" stroke="#4a6cf7" stroke-width="1.4" stroke-linejoin="round" stroke-linecap="round"/><path d="M9.4 0.6 Q12.6 0.6 12.6 3.8 Q12.6 5.9 9.4 9.8 Q6.2 5.9 6.2 3.8 Q6.2 0.6 9.4 0.6 Z" fill="#4a6cf7"/><circle cx="9.4" cy="3.7" r="1.1" fill="#fff"/></svg>
<svg class="i" style="left:25px;top:404px;" width="21" height="18" viewBox="0 0 21 18"><path d="M1.5 2.3 V16.4 M19.1 2.3 V16.4 M1.5 6.9 H19.1 M1.5 15.5 H19.1" fill="none" stroke="#4a6cf7" stroke-width="1.4" stroke-linejoin="round" stroke-linecap="round"/><rect x="11.6" y="2.1" width="3" height="3" fill="#4a6cf7"/><rect x="3.8" y="9.5" width="3" height="3" fill="#4a6cf7"/><rect x="8.7" y="9.5" width="3" height="3" fill="#4a6cf7"/></svg>
<svg class="i" style="left:26px;top:425px;" width="14" height="17" viewBox="0 0 14 17"><rect x="0.9" y="1.2" width="12" height="14.6" rx="1.8" fill="none" stroke="#4a6cf7" stroke-width="1.4" stroke-linejoin="round" stroke-linecap="round"/><path d="M0.9 8.6 H12.9 M3.2 5.2 Q6.9 3.4 10.6 5.2 M3.2 12.2 Q6.9 10.4 10.6 12.2" fill="none" stroke="#4a6cf7" stroke-width="1.4" stroke-linejoin="round" stroke-linecap="round"/></svg>
<svg class="i" style="left:25px;top:444px;" width="17" height="17" viewBox="0 0 17 17"><path d="M3 4.5 A6.6 6.6 0 1 1 2.4 11" fill="none" stroke="#4a6cf7" stroke-width="1.4" stroke-linejoin="round" stroke-linecap="round"/><path d="M1.5 1.8 L3 4.8 L6 4" fill="none" stroke="#4a6cf7" stroke-width="1.4" stroke-linejoin="round" stroke-linecap="round"/><path d="M8.6 5 V9 L11 11" fill="none" stroke="#4a6cf7" stroke-width="1.4" stroke-linejoin="round" stroke-linecap="round"/></svg>
<svg class="i" style="left:25px;top:463px;" width="20" height="18" viewBox="0 0 20 18"><g fill="none" stroke="#4a6cf7" stroke-width="1.3"><circle cx="10.5" cy="4.6" r="2.1"/><circle cx="7.6" cy="9.2" r="2.1"/><circle cx="13.1" cy="9.2" r="2.1"/><circle cx="4.4" cy="14.1" r="2.2"/><circle cx="10.3" cy="14.1" r="2.2"/><circle cx="16.2" cy="14.1" r="2.2"/></g></svg>
<svg class="i" style="left:25px;top:483px;" width="21" height="17" viewBox="0 0 21 17"><circle cx="10.8" cy="9.7" r="3.1" fill="none" stroke="#4a6cf7" stroke-width="1.3"/><path d="M2.5 9.7 H7.7 M13.2 7.6 L18 4.4 M13.2 11.8 L18 13.8 M9.2 7 L7.3 2.4" stroke="#4a6cf7" stroke-width="1.3"/><circle cx="2.5" cy="9.7" r="1.6" fill="#4a6cf7"/><circle cx="18" cy="4.4" r="1.7" fill="#4a6cf7"/><circle cx="18" cy="13.8" r="1.7" fill="#4a6cf7"/><circle cx="7.3" cy="2.4" r="1.6" fill="#4a6cf7"/></svg>
<svg class="i" style="left:25px;top:503px;" width="19" height="16" viewBox="0 0 19 16"><g fill="none" stroke="#4a6cf7" stroke-width="1.3"><rect x="7.7" y="1.7" width="3.6" height="3.4" rx="0.6"/><path d="M9.5 5.1 V10.3 M3.2 10.3 V8 H15.7 V10.3"/><circle cx="3.2" cy="12.2" r="2"/><circle cx="9.3" cy="12.2" r="2"/><circle cx="15.7" cy="12.2" r="2"/></g></svg>
<svg class="i" style="left:9px;top:529px;" width="20" height="18" viewBox="0 0 20 18"><path d="M1.9 1.4 Q5.8 1.2 10 3.3 Q14.2 1.2 18.1 1.4 V14.4 Q14.2 14.3 10 16.4 Q5.8 14.3 1.9 14.4 Z M10 3.3 V16.4" fill="none" stroke="#4a6cf7" stroke-width="1.9" stroke-linejoin="round"/></svg>
<svg class="i" style="left:9px;top:550px;" width="21" height="22" viewBox="0 0 21 22"><text x="0.3" y="9.9" font-family="Liberation Sans" font-weight="bold" font-size="10.2" fill="#4a6cf7" stroke="#4a6cf7" stroke-width="0.5" transform="translate(0.6 0) scale(1.2 1)">A</text><text x="10.4" y="20" font-family="Liberation Sans" font-weight="bold" font-size="10" fill="#4a6cf7" stroke="#4a6cf7" stroke-width="0.5" transform="scale(1.1 1)">B</text><path d="M13 1.8 H16.5 Q18 1.8 18 3.3 V7.8 M16.2 6 L18 7.9 L19.8 6" fill="none" stroke="#4a6cf7" stroke-width="1.2" stroke-linejoin="round"/><path d="M8.5 19.5 H5 Q3.5 19.5 3.5 18 V13.5 M1.7 15.3 L3.5 13.4 L5.3 15.3" fill="none" stroke="#4a6cf7" stroke-width="1.2" stroke-linejoin="round"/></svg>
<svg class="i" style="left:9px;top:577px;" width="20" height="18" viewBox="0 0 20 18"><path d="M1.9 1.4 Q5.8 1.2 10 3.3 Q14.2 1.2 18.1 1.4 V14.4 Q14.2 14.3 10 16.4 Q5.8 14.3 1.9 14.4 Z M10 3.3 V16.4" fill="none" stroke="#4a6cf7" stroke-width="1.9" stroke-linejoin="round"/></svg>
<svg class="i" style="left:9px;top:600px;" width="20" height="18" viewBox="0 0 20 18"><path d="M10 1.6 L12.4 6.6 L17.9 7.2 L13.8 10.9 L15 16.5 L10 13.6 L5 16.5 L6.2 10.9 L2.1 7.2 L7.6 6.6 Z" fill="none" stroke="#4a6cf7" stroke-width="1.8" stroke-linejoin="round"/></svg>
<svg class="i" style="left:6px;top:620px;" width="26" height="26" viewBox="0 0 26 26"><path d="M7.3 4.6 L9.2 4.6 Q11.8 5.2 11.8 8.3 V9.3 L20.6 17.6 Q21.6 18.8 20.5 20 Q19.3 21 18.2 20 L9.4 11.9 H8.6 Q5 11.5 4.6 7.6 L6.8 8.2 Q7.5 8.4 8.1 7.8 L8.6 7.3 Q8.9 6.5 8.3 6 Z" fill="none" stroke="#4a6cf7" stroke-width="1.5" stroke-linejoin="round"/></svg>
<svg class="i" style="left:7px;top:655px;" width="44" height="46" viewBox="0 0 44 46"><path d="M32.5 2.3 Q25 9 21 17 Q18.5 24 19.5 30 Q23 36 29 38.5 Q37.5 34 37.7 25 Q37.5 14 32.5 2.3 Z" fill="#ef8b80"/>
<path d="M12 19 Q17 21 22 25 Q27.5 30.5 27 38.5 Q19.5 38 15.5 31.5 Q12 25 12 19 Z" fill="#7b9ad0" opacity="0.75"/>
<path d="M1.6 35 Q8 30.5 17 30.5 Q24.5 31.5 29 38.5 Q22 43 14.5 43 Q6 41.5 1.6 35 Z" fill="#e63d70" opacity="0.92"/>
<circle cx="36.8" cy="42.7" r="3.2" fill="#2a2d6c"/></svg>
<div class="t" style="left:56.5px;top:678.66px;font-size:10.5px;line-height:15px;color:#2b2d6e;font-weight:bold;letter-spacing:-0.1px;"><span style="color:#ec7465">FLORA</span> <span style="color:#2b2d6e">SOFTWARE</span></div>
<div class="t" style="left:56px;top:694.16px;font-size:5.9px;line-height:8px;color:#2b2d6e;font-weight:bold;letter-spacing:0.14px;">Bibliothèques | Archives | Musées</div>
</body></html>
